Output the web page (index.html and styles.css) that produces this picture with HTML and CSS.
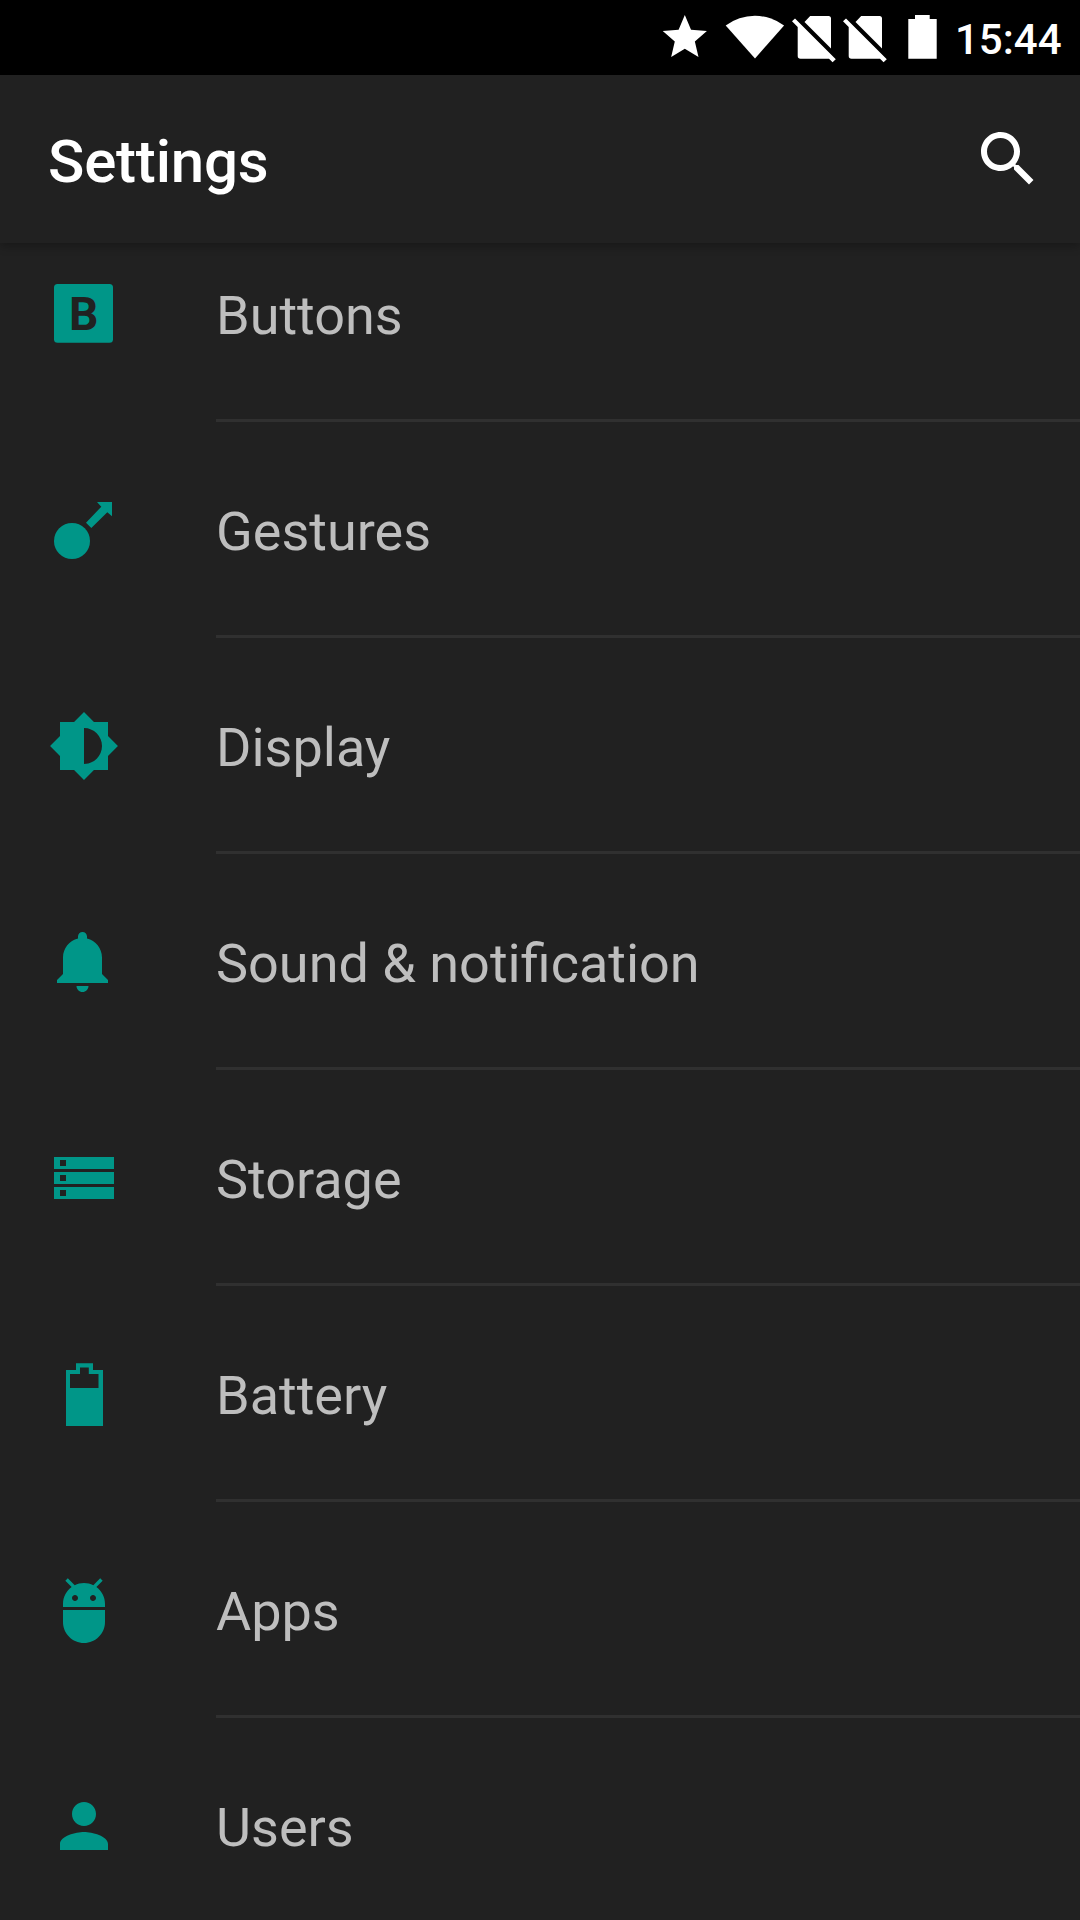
FILE: index.html
```html
<!DOCTYPE html>
<html lang="en">
<head>
<meta charset="utf-8">
<title>Settings</title>
<link rel="stylesheet" href="styles.css">
</head>
<body>
<div class="screen">
  <div class="status-bar">
    <svg class="st-star" width="46" height="75" viewBox="0 0 46 75"><path transform="translate(-3.7 10.6) scale(2.21)" d="M12 17.27L18.18 21l-1.64-7.03L22 9.24l-7.19-.61L12 2 9.19 8.63 2 9.24l5.46 4.73L5.82 21z"/></svg>
    <svg class="st-wifi" width="60" height="75" viewBox="0 0 60 75"><path d="M30 58.4L.7 25.6A48.6 48.6 0 0 1 59.1 25.6z"/></svg>
    <svg class="st-sim" width="44" height="75" viewBox="0 0 44 75"><path d="M12.5 22L18.2 16H36.5Q39 16 39 18.5V48.5zM0 21.2L3 18.5 43.8 59.3 40.6 62.3 37 58.7H8.5Q5.7 58.7 5.7 56V26.9z"/></svg>
    <svg class="st-sim" width="44" height="75" viewBox="0 0 44 75"><path d="M12.5 22L18.2 16H36.5Q39 16 39 18.5V48.5zM0 21.2L3 18.5 43.8 59.3 40.6 62.3 37 58.7H8.5Q5.7 58.7 5.7 56V26.9z"/></svg>
    <svg class="st-battery" width="30" height="75" viewBox="0 0 30 75"><path d="M7 15H21.7V19H28.7V58.7H.3V19H7z"/></svg>
    <span class="clock">15:44</span>
  </div>
  <header class="app-bar">
    <h1 class="title">Settings</h1>
    <svg class="search" viewBox="0 0 24 24"><path d="M15.5 14h-.79l-.28-.27C15.41 12.59 16 11.11 16 9.5 16 5.91 13.09 3 9.5 3S3 5.91 3 9.5 5.91 16 9.5 16c1.61 0 3.09-.59 4.23-1.57l.27.28v.79l5 4.99L20.49 19l-4.99-5zm-6 0C7.01 14 5 11.99 5 9.5S7.01 5 9.5 5 14 7.01 14 9.5 11.99 14 9.5 14z"/></svg>
  </header>
  <main class="viewport">
    <ul class="list">
      <li class="row">
        <svg class="icon" viewBox="0 0 72 72"><rect x="6" y="6" width="59" height="58.7" rx="3.5"/><text class="letter" x="21" y="52">B</text></svg>
        <span class="label">Buttons</span>
      </li>
      <li class="row">
        <svg class="icon" viewBox="0 0 72 72"><circle cx="24" cy="47" r="18"/><path d="M38 28.7L43.3 34 59.3 18.3 64 22.3V8H49L53.3 12.7z"/></svg>
        <span class="label">Gestures</span>
      </li>
      <li class="row">
        <svg class="icon" viewBox="0 0 24 24"><path d="M20 15.31L23.31 12 20 8.69V4h-4.69L12 .69 8.69 4H4v4.69L.69 12 4 15.31V20h4.69L12 23.31 15.31 20H20v-4.69zM12 18V6c3.31 0 6 2.69 6 6s-2.69 6-6 6z"/></svg>
        <span class="label">Display</span>
      </li>
      <li class="row">
        <svg class="icon" viewBox="0 0 24 24"><path d="M11.5 22c1.1 0 2-.9 2-2h-4c0 1.1.9 2 2 2zm6.5-6v-5.5c0-3.07-2.13-5.64-5-6.32V3.5c0-.83-.67-1.5-1.5-1.5S10 2.67 10 3.5v.68c-2.87.68-5 3.25-5 6.32V16l-2 2v1h17v-1l-2-2z"/></svg>
        <span class="label">Sound &amp; notification</span>
      </li>
      <li class="row">
        <svg class="icon" viewBox="0 0 72 72"><path fill-rule="evenodd" d="M6 15h60v12H6zM12 18v6h6v-6zM6 30h60v12H6zM12 33v6h6v-6zM6 45h60v12H6zM12 48v6h6v-6z"/></svg>
        <span class="label">Storage</span>
      </li>
      <li class="row">
        <svg class="icon" viewBox="0 0 72 72"><path fill-rule="evenodd" d="M28 5.2H45V12H55V68H18V12H28zM32 9.6V16H22V30H50.5V16H40.8V9.6z"/></svg>
        <span class="label">Battery</span>
      </li>
      <li class="row">
        <svg class="icon" viewBox="0 0 24 24"><path d="M5 16c0 3.87 3.13 7 7 7s7-3.13 7-7v-4H5v4zM16.12 4.37l2.1-2.1-.82-.83-2.3 2.31C14.16 3.28 13.12 3 12 3s-2.16.28-3.09.75L6.6 1.44l-.82.83 2.1 2.1C6.14 5.64 5 7.68 5 10v1h14v-1c0-2.32-1.14-4.36-2.88-5.63zM9 9c-.55 0-1-.45-1-1s.45-1 1-1 1 .45 1 1-.45 1-1 1zm6 0c-.55 0-1-.45-1-1s.45-1 1-1 1 .45 1 1-.45 1-1 1z"/></svg>
        <span class="label">Apps</span>
      </li>
      <li class="row">
        <svg class="icon" viewBox="0 0 24 24"><path d="M12 12c2.21 0 4-1.79 4-4s-1.79-4-4-4-4 1.79-4 4 1.79 4 4 4zm0 2c-2.67 0-8 1.34-8 4v2h16v-2c0-2.66-5.33-4-8-4z"/></svg>
        <span class="label">Users</span>
      </li>
    </ul>
  </main>
</div>
</body>
</html>
```
FILE: styles.css
```css
* { box-sizing: border-box; }
body { margin: 0; background: #212121; font-family: Roboto, sans-serif; }
svg { display: block; flex: none; }

.screen {
  width: 1080px;
  height: 1920px;
  display: flex;
  flex-direction: column;
  overflow: hidden;
  background: #212121;
}

.status-bar {
  flex: none;
  display: flex;
  height: 75px;
  padding-left: 662px;
  background: #000;
  color: #fff;
  fill: #fff;
}
.st-wifi { margin-left: 17px; }
.st-sim { margin-left: 7px; }
.st-battery { margin-left: 21px; }
.clock {
  margin-left: 17px;
  font-size: 42px;
  font-weight: 500;
  line-height: 80px;
}

.app-bar {
  flex: none;
  display: flex;
  align-items: center;
  justify-content: space-between;
  height: 168px;
  padding: 0 36px 0 48px;
  background: #212121;
  color: #fff;
  box-shadow: 0 3px 9px rgba(0, 0, 0, 0.28);
  z-index: 1;
}
.title {
  margin: 6px 0 0;
  font-size: 60px;
  font-weight: 500;
  line-height: 72px;
  letter-spacing: -0.2px;
}
.search { width: 72px; height: 72px; fill: #fff; }

.viewport { flex: 1; min-height: 0; overflow: hidden; }
.list { margin: -37px 0 0; padding: 0; list-style: none; }
.row {
  display: flex;
  align-items: center;
  gap: 96px;
  height: 216px;
  padding-left: 48px;
}
.icon { width: 72px; height: 72px; fill: #009688; }
.letter { font: 700 46px Roboto, sans-serif; fill: #212121; }
.label {
  flex: 1;
  height: 216px;
  border-bottom: 3px solid #303030;
  color: #bebebe;
  font-size: 54px;
  line-height: 220px;
}
```
